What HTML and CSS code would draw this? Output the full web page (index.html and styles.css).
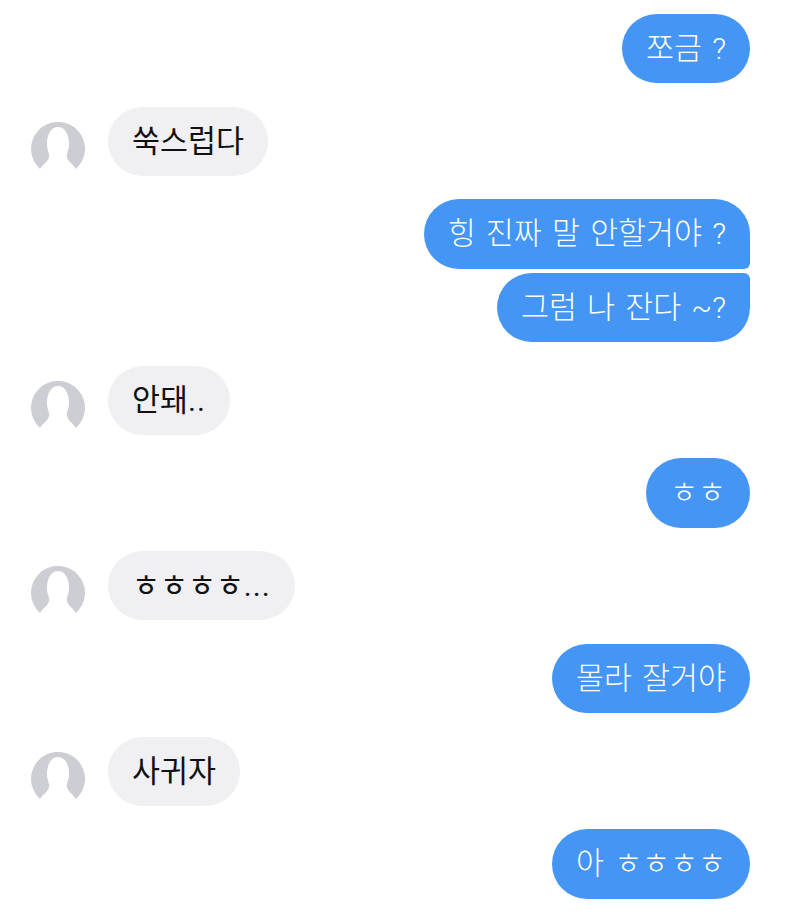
FILE: index.html
```html
<!DOCTYPE html>
<html><head>
<title>Messages</title>
<meta name="viewport" content="width=device-width, initial-scale=1">
<link rel="stylesheet" href="styles.css">
</head><body>
<svg class="defs"><symbol id="person" viewBox="0 0 54 54"><path d="M9 47A27 27 0 1 1 45 47C42 42 37 40 36 35C35 31 38 29 38 22C38 11 33 5 27 5C21 5 16 11 16 22C16 29 19 31 18 35C17 40 12 42 9 47Z"/></symbol></svg>
<div class="chat">
  <div class="row me"><div class="bubble">쪼금 ?</div></div>
  <div class="row them">
    <svg class="avatar"><use href="#person"/></svg>
    <div class="bubble">쑥스럽다</div>
  </div>
  <div class="group">
    <div class="row me"><div class="bubble first">힝 진짜 말 안할거야 ?</div></div>
    <div class="row me"><div class="bubble last">그럼 나 잔다 ~?</div></div>
  </div>
  <div class="row them">
    <svg class="avatar"><use href="#person"/></svg>
    <div class="bubble">안돼<span class="dots">..</span></div>
  </div>
  <div class="row me"><div class="bubble">ㅎㅎ</div></div>
  <div class="row them">
    <svg class="avatar"><use href="#person"/></svg>
    <div class="bubble">ㅎㅎㅎㅎ<span class="dots">...</span></div>
  </div>
  <div class="row me"><div class="bubble">몰라 잘거야</div></div>
  <div class="row them">
    <svg class="avatar"><use href="#person"/></svg>
    <div class="bubble">사귀자</div>
  </div>
  <div class="row me"><div class="bubble">아 ㅎㅎㅎㅎ</div></div>
</div>
</body></html>
```

FILE: styles.css
```css
body { margin: 0; background: #fff; font-family: Roboto, "Noto Sans CJK KR", sans-serif; overflow: hidden; }
.defs { display: none; }
.chat { display: flex; flex-direction: column; gap: 23.35px; padding: 14px 50px 0 31px; }
.group { display: flex; flex-direction: column; gap: 4px; }
.row { display: flex; align-items: flex-end; }
.me { justify-content: flex-end; }
.them { gap: 23px; }
.avatar { width: 54px; height: 54px; fill: #cdced3; flex: none; }
.bubble { height: 69.4px; box-sizing: border-box; padding: 0 24px; border-radius: 35px; font-size: 30.4px; line-height: 70px; word-spacing: 2.8px; white-space: nowrap; }
.me .bubble { background: #4595f5; color: #fff; font-weight: 300; }
.them .bubble { background: #f0f0f2; color: #111; }
.me .first { border-bottom-right-radius: 6px; }
.me .last { border-top-right-radius: 6px; }
.dots { letter-spacing: 1px; }
```
